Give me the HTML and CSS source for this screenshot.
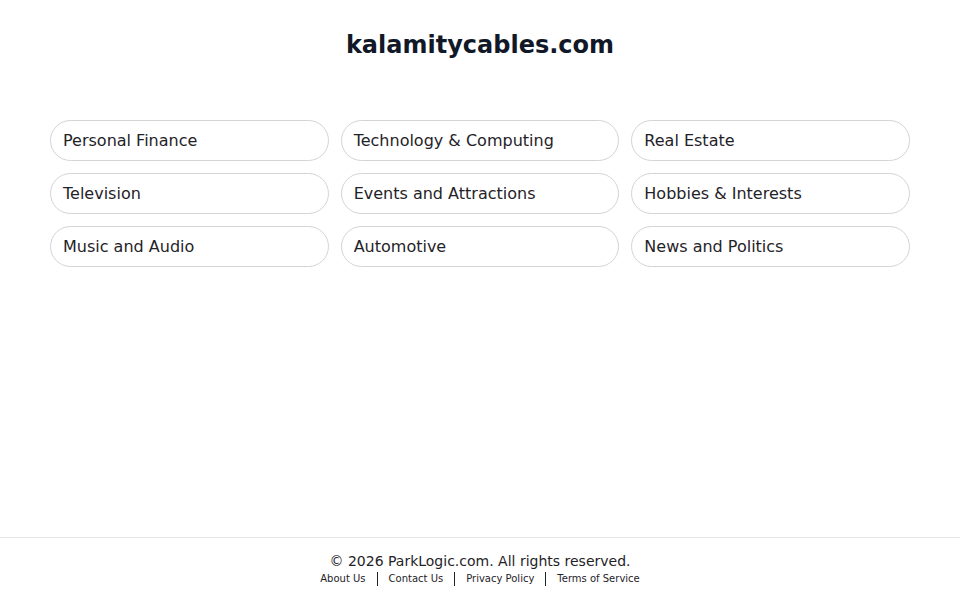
FILE: index.html
```html
<!DOCTYPE html>
<html lang="en">
<head>
<meta charset="utf-8">
<title>kalamitycables.com</title>
<link rel="stylesheet" href="styles.css">
</head>
<body>
<div class="page">
  <main class="main">
    <h1 class="title">kalamitycables.com</h1>
    <div class="grid">
      <a class="pill" href="#">Personal Finance</a>
      <a class="pill" href="#">Technology &amp; Computing</a>
      <a class="pill" href="#">Real Estate</a>
      <a class="pill" href="#">Television</a>
      <a class="pill" href="#">Events and Attractions</a>
      <a class="pill" href="#">Hobbies &amp; Interests</a>
      <a class="pill" href="#">Music and Audio</a>
      <a class="pill" href="#">Automotive</a>
      <a class="pill" href="#">News and Politics</a>
    </div>
  </main>
  <footer class="footer">
    <div class="copy">© 2026 ParkLogic.com. All rights reserved.</div>
    <nav class="links">
      <a href="#">About Us</a><span class="sep"></span>
      <a href="#">Contact Us</a><span class="sep"></span>
      <a href="#">Privacy Policy</a><span class="sep"></span>
      <a href="#">Terms of Service</a>
    </nav>
  </footer>
</div>
</body>
</html>
```

FILE: styles.css
```css
html, body {
  margin: 0;
  padding: 0;
  background: #ffffff;
}
body {
  font-family: "DejaVu Sans", sans-serif;
  color: #1f2328;
}
.page {
  display: flex;
  flex-direction: column;
  min-height: 100vh;
}
.main {
  flex: 1;
  padding: 31px 50px 0;
}
.title {
  margin: 0;
  text-align: center;
  font-size: 24px;
  line-height: 28px;
  font-weight: bold;
  color: #111827;
}
.grid {
  margin-top: 61px;
  display: grid;
  grid-template-columns: repeat(3, 1fr);
  column-gap: 12px;
  row-gap: 12px;
}
.pill {
  display: flex;
  align-items: center;
  height: 39px;
  padding: 0 12px;
  border: 1px solid #d4d4d8;
  border-radius: 21px;
  font-size: 16px;
  color: #1f2328;
  text-decoration: none;
}
.footer {
  border-top: 1px solid #e5e7eb;
  padding: 15px 0 14px;
  text-align: center;
}
.copy {
  font-size: 14px;
  line-height: 17px;
  color: #1f2328;
}
.links {
  display: flex;
  justify-content: center;
  align-items: center;
  margin-top: 1px;
  font-size: 10px;
  line-height: 15px;
}
.links a {
  color: #1f2328;
  text-decoration: none;
}
.sep {
  display: inline-block;
  width: 0;
  height: 14px;
  border-left: 1px solid #1f2328;
  margin: 0 11px;
}
```
